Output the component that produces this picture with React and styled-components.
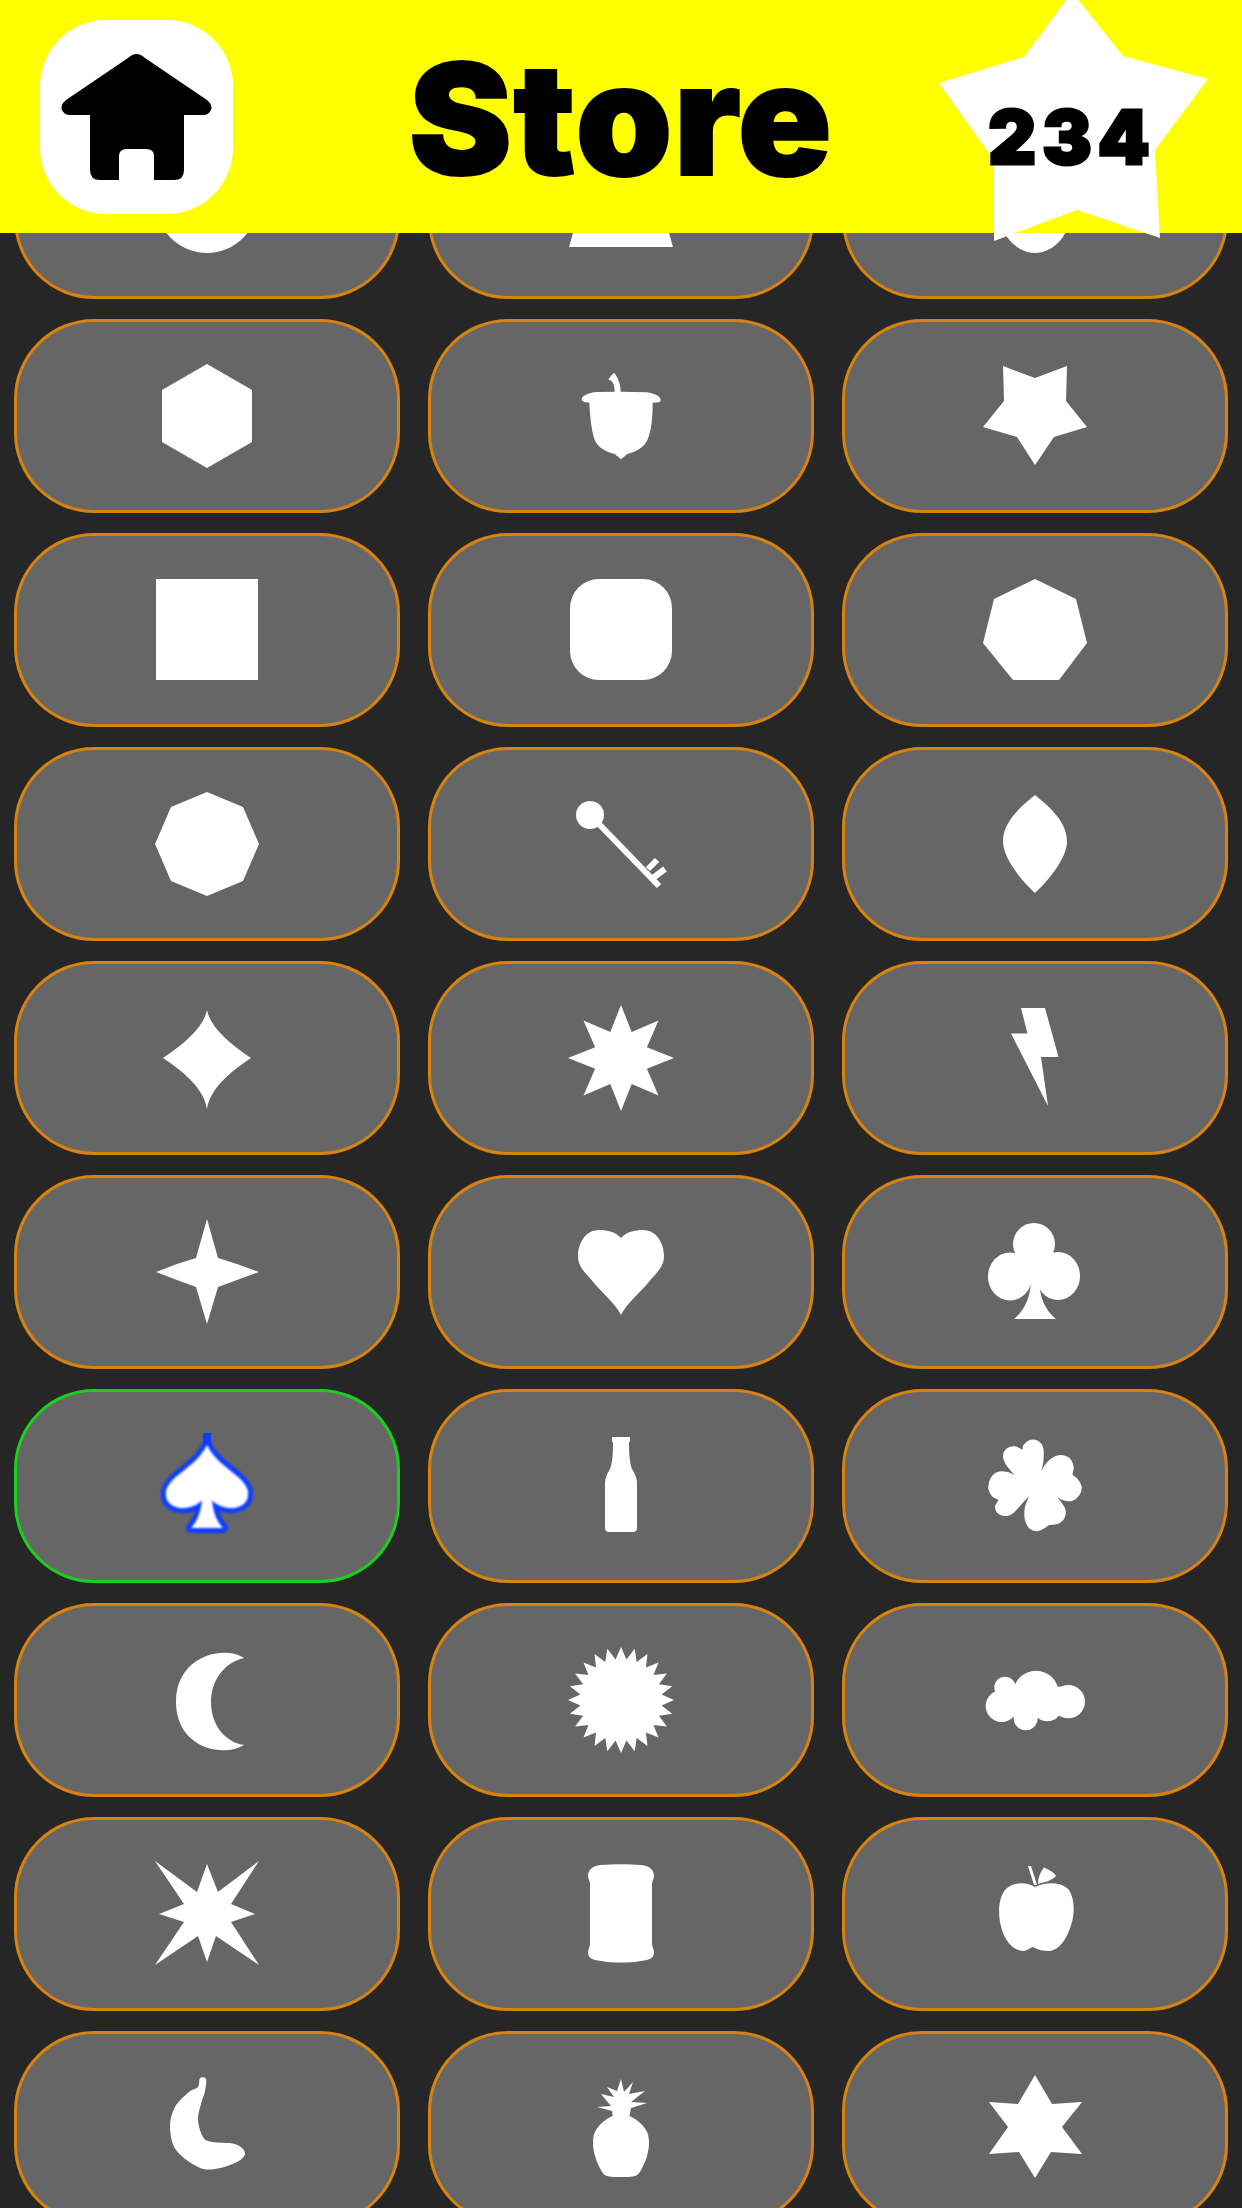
import styled, { createGlobalStyle } from 'styled-components';

const GlobalStyle = createGlobalStyle`
  html, body {
    margin: 0;
    padding: 0;
    background: #262626;
  }
`;

const Screen = styled.div`
  position: relative;
  width: 1242px;
  height: 2208px;
  overflow: hidden;
  background: #262626;
  font-family: Inter, "Liberation Sans", Arial, sans-serif;
`;

const TopBar = styled.header`
  position: absolute;
  top: 0;
  left: 0;
  right: 0;
  z-index: 2;
  height: 233px;
  background: #ffff00;
  display: grid;
  grid-template-columns: 1fr auto 1fr;
  grid-template-rows: 233px;
  align-items: center;
`;

const HomeButton = styled.button`
  justify-self: start;
  margin: 0 0 0 40px;
  padding: 0;
  width: 193px;
  height: 194px;
  border: none;
  border-radius: 66px;
  background: #fff;
  svg {
    display: block;
  }
`;

const Title = styled.h1`
  margin: 3px 0 0;
  color: #000;
  font-size: 155px;
  line-height: 1;
  font-weight: 900;
  letter-spacing: 1.5px;
  -webkit-text-stroke: 2px #000;
`;

const Badge = styled.div`
  justify-self: end;
  align-self: start;
  position: relative;
  margin-right: 22px;
  width: 290px;
  height: 245px;
  display: flex;
  align-items: center;
  justify-content: center;
  svg {
    position: absolute;
    inset: 0;
  }
`;

const BadgeCount = styled.span`
  position: relative;
  margin: 28px 0 0 -6px;
  color: #000;
  font-size: 74px;
  line-height: 1;
  font-weight: 900;
  letter-spacing: 6px;
  -webkit-text-stroke: 3px #000;
`;

const Grid = styled.main`
  display: grid;
  grid-template-columns: repeat(3, 386px);
  grid-auto-rows: 194px;
  gap: 20px 28px;
  padding: 105px 14px 0;
`;

const ItemCard = styled.div`
  box-sizing: border-box;
  display: flex;
  align-items: center;
  justify-content: center;
  background: #666;
  border: 3px solid ${props => (props.$selected ? '#1bd01b' : '#d9830f')};
  border-radius: 80px;
`;

const Shape = styled.svg`
  display: block;
  width: 120px;
  height: 120px;
  fill: #fff;
  overflow: visible;
`;

const CENTER = '-60 -60 120 120';

// star polygon with n tips, first tip pointing up
const star = (n, outer, inner) => {
  const pts = [];
  for (let i = 0; i < n * 2; i++) {
    const r = i % 2 ? inner : outer;
    const a = (Math.PI * i) / n - Math.PI / 2;
    pts.push(`${(r * Math.cos(a)).toFixed(1)},${(r * Math.sin(a)).toFixed(1)}`);
  }
  return pts.join(' ');
};

// closed catmull-rom curve through the points, for the hand traced silhouettes
const smooth = (pts) => {
  const n = pts.length;
  let d = `M${pts[0][0]},${pts[0][1]}`;
  for (let i = 0; i < n; i++) {
    const p0 = pts[(i - 1 + n) % n];
    const p1 = pts[i];
    const p2 = pts[(i + 1) % n];
    const p3 = pts[(i + 2) % n];
    const c1 = [p1[0] + (p2[0] - p0[0]) / 6, p1[1] + (p2[1] - p0[1]) / 6];
    const c2 = [p2[0] - (p3[0] - p1[0]) / 6, p2[1] - (p3[1] - p1[1]) / 6];
    d += ` C${c1[0].toFixed(1)},${c1[1].toFixed(1)} ${c2[0].toFixed(1)},${c2[1].toFixed(1)} ${p2[0]},${p2[1]}`;
  }
  return d + ' Z';
};

const SPADE =
  'M0,-41 C6,-28 20,-18 30,-10 C38,-3 42,3 41,9 C41,19 30,23 22,22 C14,21 8,18 5,14 C6,26 10,36 16,42 L-16,42 C-10,36 -6,26 -5,14 C-8,18 -14,21 -22,22 C-30,23 -41,19 -41,9 C-42,3 -38,-3 -30,-10 C-20,-18 -6,-28 0,-41 Z';

const CLOVER = smooth([
  [238, 172], [247, 125], [247, 85], [232, 65], [210, 63], [192, 78], [190, 92], [165, 82], [142, 88], [132, 108],
  [142, 135], [172, 172], [145, 160], [115, 158], [95, 175], [88, 205], [100, 228], [118, 240], [108, 260], [118, 280],
  [140, 285], [160, 275], [208, 225], [197, 265], [198, 300], [212, 325], [235, 330], [258, 318], [268, 312], [295, 308],
  [312, 290], [312, 265], [285, 225], [310, 238], [335, 240], [355, 225], [362, 200], [350, 178], [335, 165], [338, 140],
  [325, 115], [300, 108], [275, 118], [255, 140],
]);

const BANANA = smooth([
  [-7, -50], [-1, -49], [-2, -37], [-6, -24], [-9, -8], [-4, 9], [5, 14], [28, 16], [38, 25], [30, 34], [8, 41], [-9, 39],
  [-31, 22], [-37, -1], [-32, -21], [-18, -36], [-9, -41],
]);

const PINEAPPLE_BODY = smooth([
  [0, -14], [-14, -9], [-25, 2], [-28, 14], [-26, 28], [-20, 42], [-14, 48], [0, 49], [14, 48], [20, 42], [26, 28], [28, 14], [25, 2], [14, -9],
]);

const items = [
  { shape: <circle r="51" /> },
  { shape: <polygon points="-52,45 52,45 25,-50 -25,-50" /> },
  { shape: <ellipse rx="38.5" ry="51" /> },

  { shape: <polygon points="0,-52 45,-26 45,26 0,52 -45,26 -45,-26" /> },
  {
    box: '63 18 360 360',
    shape: (
      <path d="M205,88 C212,78 218,72 222,68 C232,80 242,100 242,125 L320,127 C345,130 362,140 362,150 C362,158 350,158 338,158 C338,200 335,240 322,270 C312,292 290,305 262,312 L243,328 L224,312 C195,305 174,292 164,270 C154,240 150,200 148,158 C135,158 125,155 125,148 C125,138 145,128 170,126 L224,125 C224,105 218,92 205,88 Z" />
    ),
  },
  { shape: <polygon points="-32,-50 0,-38 32,-50 31,-15 52,11 19,21 0,49 -18,21 -52,11 -31,-15" /> },

  { shape: <rect x="-51" y="-51" width="102" height="101" /> },
  { shape: <rect x="-51" y="-51" width="102" height="101" rx="29" /> },
  { shape: <polygon points="0,-51 41,-31 52,13 24,50 -22,50 -52,13 -41,-31" /> },

  { shape: <polygon points="0,-52 36,-37 52,0 36,37 0,52 -36,37 -52,0 -36,-37" /> },
  {
    shape: (
      <>
        <circle cx="-31" cy="-29" r="14" />
        <path
          d="M-23,-21 L38,42 M27,25 L36,16 M32,34 L44,25"
          fill="none"
          stroke="#fff"
          strokeWidth="6"
        />
      </>
    ),
  },
  { shape: <path d="M0,-49 C8,-42 32,-25 32,-3 C32,15 12,38 0,49 C-12,38 -32,15 -32,-3 C-32,-25 -8,-42 0,-49 Z" /> },

  { shape: <path d="M0,-48 C3,-32 20,-16 44,0 C20,16 3,32 0,51 C-3,32 -20,16 -44,0 C-20,-16 -3,-32 0,-48 Z" /> },
  { shape: <polygon points={star(8, 53, 28)} /> },
  { shape: <polygon points="-14,-50 10,-50 23.5,-1 6,-1 13,48 -24,-24.5 -7.5,-24.5" /> },

  { shape: <polygon points="0,-53 11,-14 30,-8 52,0 30,8 11,15 0,52 -11,15 -30,8 -51,0 -30,-8 -11,-14" /> },
  { shape: <path d="M0,-34 C-5,-40 -14,-42 -22,-42 C-36,-42 -43,-28 -43,-16 C-43,-4 -34,2 -27,11 C-18,22 -5,32 0,43 C5,32 18,22 27,11 C34,2 43,-4 43,-16 C43,-28 36,-42 22,-42 C14,-42 5,-40 0,-34 Z" /> },
  {
    shape: (
      <>
        <circle cx="-1" cy="-28" r="21" />
        <ellipse cx="-25" cy="4.5" rx="22" ry="24" />
        <ellipse cx="23" cy="4" rx="22" ry="24" />
        <path d="M-12,-14 L12,-14 L16,12 L-16,12 Z" />
        <path d="M-4,5 L4,5 C4,25 10,38 21,47 L-21,47 C-10,38 -4,25 -4,5 Z" />
      </>
    ),
  },

  {
    selected: true,
    shape: (
      <>
        <defs>
          <filter id="spadeGlow" x="-30%" y="-30%" width="160%" height="160%">
            <feGaussianBlur stdDeviation="1.1" />
          </filter>
        </defs>
        <path d={SPADE} fill="#0a3cff" stroke="#0a3cff" strokeWidth="10" strokeLinejoin="round" filter="url(#spadeGlow)" />
        <rect x="-4" y="-53" width="8" height="12" fill="#0a3cff" />
        <path d={SPADE} filter="url(#spadeGlow)" />
      </>
    ),
  },
  { shape: <path d="M-9,-49 L9,-49 L9,-44 L8,-44 C8,-30 9,-22 11,-17 C14,-12 16,-8 16,-3 L16,42 C16,45 14,46 12,46 L-12,46 C-14,46 -16,45 -16,42 L-16,-3 C-16,-8 -14,-12 -11,-17 C-9,-22 -8,-30 -8,-44 L-9,-44 Z" /> },
  { box: '45 18 360 360', shape: <path d={CLOVER} stroke="#fff" strokeWidth="6" /> },

  { shape: <path d="M37,-42 C18,-55 -31,-45 -31,2 C-31,48 16,58 37,45 C18,42 4,25 4,2 C4,-20 18,-38 37,-42 Z" /> },
  { shape: <polygon points={star(24, 53, 41)} /> },
  {
    box: '45 660 360 360',
    shape: (
      <>
        <circle cx="125" cy="858" r="48" />
        <circle cx="135" cy="802" r="32" />
        <circle cx="228" cy="820" r="68" />
        <circle cx="325" cy="845" r="50" />
        <circle cx="197" cy="895" r="36" />
        <circle cx="262" cy="860" r="44" />
        <rect x="120" y="800" width="210" height="85" />
      </>
    ),
  },

  { shape: <polygon points="0,-50 11,-22 52,-53 24,-10 48,0 24,8 52,51 9,22 0,48 -9,22 -52,51 -23,8 -48,0 -23,-10 -52,-53 -10,-22" /> },
  { shape: <path d="M-20,-49 C-8,-50 8,-50 20,-49 C29,-48 33,-44 33,-38 C33,-35 31,-33 31,-30 L31,30 C31,33 33,35 33,38 C33,44 29,46 20,47 C8,49 -8,49 -20,47 C-29,46 -33,44 -33,38 C-33,35 -31,33 -31,30 L-31,-30 C-31,-33 -33,-35 -33,-38 C-33,-44 -29,-48 -20,-49 Z" /> },
  {
    shape: (
      <>
        <path d="M0,-27 C-8,-32 -22,-33 -30,-24 C-36,-16 -37,-4 -35,8 C-32,24 -24,36 -12,37 C-8,37 -6,34 -2,33 C4,36 8,37 14,37 C26,36 33,22 37,8 C40,-4 39,-16 34,-24 C26,-33 10,-32 0,-27 Z" />
        <path d="M-7,-48 L-4,-48 L2,-29 L-1,-29 Z" />
        <path d="M9,-46.5 C14,-44 19,-42 21,-38 C16,-33 10,-32 3,-30 C3,-36 5,-42 9,-46.5 Z" />
      </>
    ),
  },

  { shape: <path d={BANANA} /> },
  {
    shape: (
      <>
        <polygon points="0,-49 3,-36 12,-46 8,-34 24,-37 10,-26 26,-25 10,-20 8,-10 -8,-10 -9,-17 -24,-21 -10,-22 -20,-34 -7,-31 -14,-41 -4,-37" />
        <path d={PINEAPPLE_BODY} />
      </>
    ),
  },
  { shape: <polygon points="0,-53 17,-24 47,-26 27,-1 47,26 16,24 0,50 -16,24 -46,26 -27,-1 -46,-26 -17,-24" /> },
];

const App = () => (
  <Screen>
    <GlobalStyle />
    <TopBar>
      <HomeButton aria-label="Home">
        <svg width="193" height="194" viewBox="0 0 193 194">
          <path d="M88,38 Q96.5,30 105,38 L167,80 Q173,85 171,90 Q169,95 163,95 L144,95 L144,150 Q144,160 134,160 L114,160 L114,136 Q114,129 106,129 L87,129 Q79,129 79,136 L79,160 L60,160 Q50,160 50,150 L50,95 L30,95 Q24,95 22,90 Q20,85 26,80 Z" fill="#000" />
        </svg>
      </HomeButton>
      <Title>Store</Title>
      <Badge>
        <svg width="290" height="245" viewBox="930 0 290 245">
          <polygon points="1072,-8 1123,56 1208,79 1155,150 1160,238 1077,210 994,241 994,160 939,83 1024,57" fill="#fff" />
        </svg>
        <BadgeCount>234</BadgeCount>
      </Badge>
    </TopBar>
    <Grid>
      {items.map((item, i) => (
        <ItemCard key={i} $selected={item.selected}>
          <Shape viewBox={item.box || CENTER}>{item.shape}</Shape>
        </ItemCard>
      ))}
    </Grid>
  </Screen>
);

export default App;
